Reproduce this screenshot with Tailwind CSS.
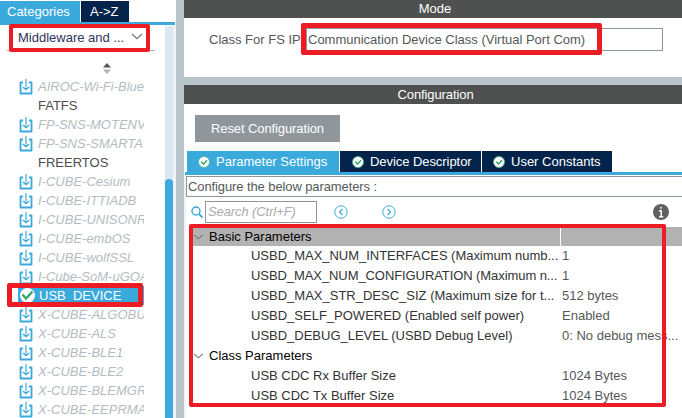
<!DOCTYPE html>
<html lang="en">
<head>
<meta charset="utf-8">
<title>USB_DEVICE Mode and Configuration</title>
<script src="https://cdn.jsdelivr.net/npm/@tailwindcss/browser@4"></script>
</head>
<body class="relative flex h-[418px] w-[682px] overflow-hidden bg-white font-['Liberation_Sans',Arial,sans-serif] text-[13px] leading-5 text-[#55585a]">
<svg class="hidden">
  <symbol id="pack" viewBox="0 0 14 16"><path d="M4 3.500H1.500V14.500H12.500V3.500H10" fill="none" stroke="#3aa9dc" stroke-width="1.800" stroke-linejoin="round"/><path d="M7 0V8" stroke="#62bbe3" stroke-width="1.500"/><path d="M3.500 7.500L7 9L10.500 7.500V8.500L7 11.500L3.500 8.500Z" fill="#3aa9dc"/></symbol>
  <symbol id="ok" viewBox="0 0 12 12"><circle cx="6" cy="6" r="5.500" fill="#fff" stroke="#54b588" stroke-width=".8"/><path d="M3.200 5.800L5.500 8L9 4.200" fill="none" stroke="#359c63" stroke-width="1.400"/></symbol>
  <symbol id="chev" viewBox="0 0 12 7"><path d="M1 1L6 5.700L11 1" fill="none" stroke="#777" stroke-width="1.200"/></symbol>
</svg>

<aside class="flex w-[176px] shrink-0 flex-col">
  <nav class="flex h-[25px] w-[175px] gap-px border-b-[3px] border-[#3aa9dc] pt-px text-white">
    <div class="flex w-20 items-center bg-[#3aa9dc] pl-[7px]">Categories</div>
    <div class="flex w-12 items-center bg-[#03234b] pl-[9px]">A-&gt;Z</div>
  </nav>
  <div class="flex h-[393px]">
    <div class="w-[165px] overflow-hidden">
      <div class="ml-[7px] flex h-[26px] w-[148px] items-center justify-between border-b border-[#a9b0b5] pt-px pr-3 pl-[11px] text-[#30345c]">Middleware and ...<svg class="-mt-[3px] h-[7px] w-3"><use href="#chev"/></svg></div>
      <svg class="mt-3 ml-[102px] h-[11px] w-[10px]" viewBox="0 0 10 11"><path d="M1 4.500L5 0L9 4.500Z" fill="#555"/><path d="M1 6.500H9L5 11Z" fill="#b5b5b5"/></svg>
      <ul class="mt-[3px] w-[144px] overflow-hidden whitespace-nowrap text-[#b3bcc2] italic">
        <li class="flex h-[19px] items-center pl-[19px]"><svg class="mr-[5px] h-4 w-[14px] shrink-0"><use href="#pack"/></svg>AIROC-Wi-Fi-Blue</li>
        <li class="flex h-[19px] items-center pl-[38px] text-[#4c4c4c] not-italic">FATFS</li>
        <li class="flex h-[19px] items-center pl-[19px]"><svg class="mr-[5px] h-4 w-[14px] shrink-0"><use href="#pack"/></svg>FP-SNS-MOTENV</li>
        <li class="flex h-[19px] items-center pl-[19px]"><svg class="mr-[5px] h-4 w-[14px] shrink-0"><use href="#pack"/></svg>FP-SNS-SMARTA</li>
        <li class="flex h-[19px] items-center pl-[38px] text-[#4c4c4c] not-italic">FREERTOS</li>
        <li class="flex h-[19px] items-center pl-[19px]"><svg class="mr-[5px] h-4 w-[14px] shrink-0"><use href="#pack"/></svg>I-CUBE-Cesium</li>
        <li class="flex h-[19px] items-center pl-[19px]"><svg class="mr-[5px] h-4 w-[14px] shrink-0"><use href="#pack"/></svg>I-CUBE-ITTIADB</li>
        <li class="flex h-[19px] items-center pl-[19px]"><svg class="mr-[5px] h-4 w-[14px] shrink-0"><use href="#pack"/></svg>I-CUBE-UNISONR</li>
        <li class="flex h-[19px] items-center pl-[19px]"><svg class="mr-[5px] h-4 w-[14px] shrink-0"><use href="#pack"/></svg>I-CUBE-embOS</li>
        <li class="flex h-[19px] items-center pl-[19px]"><svg class="mr-[5px] h-4 w-[14px] shrink-0"><use href="#pack"/></svg>I-CUBE-wolfSSL</li>
        <li class="flex h-[19px] items-center pl-[19px]"><svg class="mr-[5px] h-4 w-[14px] shrink-0"><use href="#pack"/></svg>I-Cube-SoM-uGOA</li>
        <li class="ml-[18px] flex h-[19px] items-center bg-[#3aa9dc] pl-[2px] text-white not-italic"><svg class="mr-1 h-[15px] w-[15px] shrink-0" viewBox="0 0 15 15"><circle cx="7.500" cy="7.500" r="7.500" fill="#fff"/><path d="M2.500 6.500L6 10.500L12.500 3.500" fill="none" stroke="#35a465" stroke-width="2.300"/></svg>USB_DEVICE</li>
        <li class="flex h-[19px] items-center pl-[19px]"><svg class="mr-[5px] h-4 w-[14px] shrink-0"><use href="#pack"/></svg>X-CUBE-ALGOBU</li>
        <li class="flex h-[19px] items-center pl-[19px]"><svg class="mr-[5px] h-4 w-[14px] shrink-0"><use href="#pack"/></svg>X-CUBE-ALS</li>
        <li class="flex h-[19px] items-center pl-[19px]"><svg class="mr-[5px] h-4 w-[14px] shrink-0"><use href="#pack"/></svg>X-CUBE-BLE1</li>
        <li class="flex h-[19px] items-center pl-[19px]"><svg class="mr-[5px] h-4 w-[14px] shrink-0"><use href="#pack"/></svg>X-CUBE-BLE2</li>
        <li class="flex h-[19px] items-center pl-[19px]"><svg class="mr-[5px] h-4 w-[14px] shrink-0"><use href="#pack"/></svg>X-CUBE-BLEMGR</li>
        <li class="flex h-[19px] items-center pl-[19px]"><svg class="mr-[5px] h-4 w-[14px] shrink-0"><use href="#pack"/></svg>X-CUBE-EEPRMA</li>
      </ul>
    </div>
    <div class="mt-px w-2 bg-[#d8e8f5] pt-[153px]"><div class="h-[239px] rounded-t-[4px] bg-[#3aa9dc]"></div></div>
    <div class="w-[3px] bg-[#f0f2f4]"></div>
  </div>
</aside>

<div class="w-2 shrink-0 bg-[#b8c4ca]"></div>

<main class="flex w-[498px] flex-col">
  <h2 class="flex h-[18px] items-center justify-center bg-[#4e5150] pl-1 text-white">Mode</h2>
  <section class="flex h-[59px] items-start pt-[10px] pl-[25px]">
    <span class="w-[97px] pt-[2px]">Class For FS IP</span>
    <div class="h-[23px] w-[357px] border border-[#8f969c] pt-px pl-px">Communication Device Class (Virtual Port Com)</div>
  </section>
  <div class="h-2 bg-[#b8c4ca]"></div>
  <h2 class="flex h-[19px] items-center justify-center bg-[#4e5150] pl-[5px] tracking-[-0.1px] text-white">Configuration</h2>
  <section class="flex h-[314px] flex-col pt-[11px]">
    <button class="ml-[11px] flex h-[27px] w-[145px] items-center justify-center bg-[#90979c] tracking-[-0.1px] text-white">Reset Configuration</button>
    <nav class="mt-[9px] ml-px flex h-6 gap-px border-b-[3px] border-[#3aa9dc] pl-[2px] text-white">
      <div class="flex w-[152px] items-center gap-[6px] bg-[#3aa9dc] pl-[11px]"><svg class="h-3 w-3"><use href="#ok"/></svg>Parameter Settings</div>
      <div class="flex w-[141px] items-center gap-[6px] bg-[#03234b] pl-3 tracking-[-0.06px]"><svg class="h-3 w-3"><use href="#ok"/></svg>Device Descriptor</div>
      <div class="flex w-[130px] items-center gap-[6px] bg-[#03234b] pl-[11px]"><svg class="h-3 w-3"><use href="#ok"/></svg>User Constants</div>
    </nav>
    <div class="flex min-h-0 flex-1 flex-col border-l-2 border-[#f0f2f4] pt-px">
      <div class="h-[21px] border border-r-0 border-[#8f969c] pl-px leading-[19px] tracking-[-0.1px]">Configure the below parameters :</div>
      <div class="flex h-[30px] items-center pl-[5px]">
        <svg class="h-3 w-3" viewBox="0 0 12 12"><circle cx="5" cy="5" r="4" fill="none" stroke="#3aa9dc" stroke-width="1.500"/><path d="M8 8L11.500 11.500" stroke="#3aa9dc" stroke-width="1.800"/></svg>
        <div class="ml-[2px] flex h-[22px] w-[112px] items-center border border-[#8f969c] pl-[2px] tracking-[-0.1px] text-[#aaa] italic">Search (Ctrl+F)</div>
        <svg class="ml-[17px] h-[14px] w-[14px]" viewBox="0 0 14 14" fill="none" stroke="#3aa9dc"><circle cx="7" cy="7" r="6.200"/><path d="M8.500 4L5.500 7L8.500 10" stroke-width="1.200"/></svg>
        <svg class="ml-[34px] h-[14px] w-[14px]" viewBox="0 0 14 14" fill="none" stroke="#3aa9dc"><circle cx="7" cy="7" r="6.200"/><path d="M5.500 4L8.500 7L5.500 10" stroke-width="1.200"/></svg>
        <svg class="ml-[257px] h-4 w-4" viewBox="0 0 16 16"><circle cx="8" cy="8" r="8" fill="#606060"/><path d="M8 2.800V4.800M6 6.700H8.200V12.800M6 12.700H10.300" stroke="#fff" stroke-width="1.500" fill="none"/></svg>
      </div>
      <div class="ml-[7px] w-[489px] whitespace-nowrap text-[#333]">
        <div class="grid h-[19px] grid-cols-[367px_1fr] items-center gap-px bg-[#b2b2b2] text-black"><span class="flex items-center gap-[5px]"><svg class="h-[6px] w-[11px]"><use href="#chev"/></svg>Basic Parameters</span><span class="-ml-px h-full border-l border-white"></span></div>
        <div class="grid h-5 grid-cols-[311px_1fr] pl-[58px]"><span class="tracking-[-0.03px]">USBD_MAX_NUM_INTERFACES (Maximum numb...</span><span class="text-[#55585a]">1</span></div>
        <div class="grid h-5 grid-cols-[311px_1fr] pl-[58px]"><span class="tracking-[-0.08px]">USBD_MAX_NUM_CONFIGURATION (Maximum n...</span><span class="text-[#55585a]">1</span></div>
        <div class="grid h-5 grid-cols-[311px_1fr] pl-[58px]"><span>USBD_MAX_STR_DESC_SIZ (Maximum size for t...</span><span class="text-[#55585a]">512 bytes</span></div>
        <div class="grid h-5 grid-cols-[311px_1fr] pl-[58px]"><span>USBD_SELF_POWERED (Enabled self power)</span><span class="text-[#55585a]">Enabled</span></div>
        <div class="grid h-5 grid-cols-[311px_1fr] pl-[58px]"><span class="tracking-[-0.01px]">USBD_DEBUG_LEVEL (USBD Debug Level)</span><span class="text-[#55585a]">0: No debug mess...</span></div>
        <div class="flex h-5 items-center gap-[5px] text-black"><svg class="h-[6px] w-[11px]"><use href="#chev"/></svg>Class Parameters</div>
        <div class="grid h-5 grid-cols-[311px_1fr] pl-[58px]"><span>USB CDC Rx Buffer Size</span><span class="text-[#55585a]">1024 Bytes</span></div>
        <div class="grid h-5 grid-cols-[311px_1fr] pl-[58px]"><span>USB CDC Tx Buffer Size</span><span class="text-[#55585a]">1024 Bytes</span></div>
      </div>
    </div>
  </section>
</main>

<div class="absolute top-[24px] left-[9px] h-[28px] w-[141px] rounded-[2px] border-[4px] border-[#ed1c24]"></div>
<div class="absolute top-[283px] left-[7px] h-[24px] w-[136px] rounded-[2px] border-[5px] border-[#ed1c24]"></div>
<div class="absolute top-[23px] left-[301px] h-[32px] w-[301px] rounded-[2px] border-[5px] border-[#ed1c24]"></div>
<div class="absolute top-[224px] left-[189px] h-[183px] w-[477px] rounded-[2px] border-[4px] border-[#ed1c24]"></div>
</body>
</html>
